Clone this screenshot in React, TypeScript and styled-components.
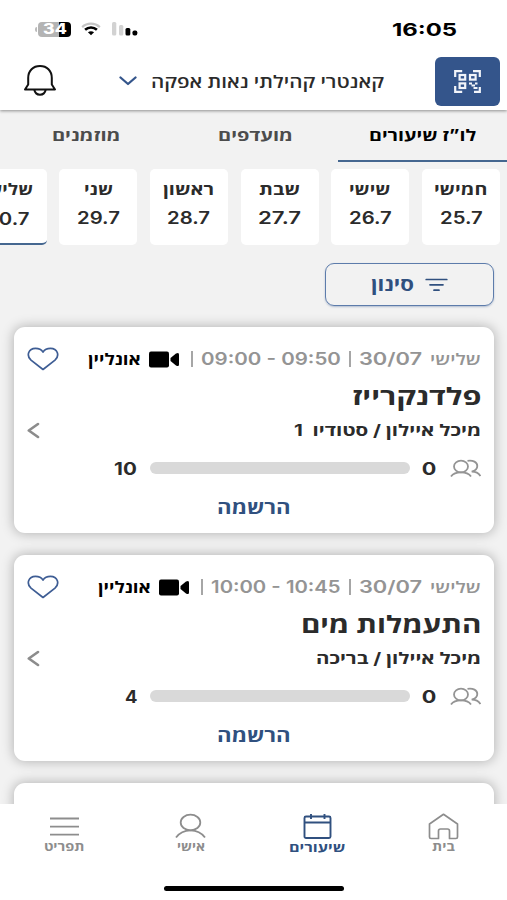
import React, { useLayoutEffect, useRef, useState } from "react";
import styled, { createGlobalStyle, css } from "styled-components";

const BLUE = "#34558b";
const NAVY = "#30507f";
const INK = "#2b2b2b";
const GREY = "#949494";

const GlobalStyle = createGlobalStyle`
  * { box-sizing: border-box; }
  body {
    margin: 0;
    background: #fff;
    color: ${INK};
    font-family: Inter, "Open Sans", "DejaVu Sans", sans-serif;
    font-weight: 600;
    overflow: hidden;
  }
  svg { display: block; flex: none; }
  button { font: inherit; color: inherit; background: none; border: 0; padding: 0; }
`;

const FitBox = styled.span<{ $w: number; $size: number; $weight: number; $color: string; $dy: number }>`
  display: flex;
  flex: none;
  direction: rtl;
  width: ${(p) => p.$w}px;
  font-size: ${(p) => p.$size}px;
  font-weight: ${(p) => p.$weight};
  color: ${(p) => p.$color};
  line-height: 1.2;
  padding-top: ${(p) => p.$dy * 2}px;
`;
const FitInner = styled.span`
  flex: none;
  white-space: pre;
  transform-origin: right center;
`;

type FitProps = {
  w: number;
  size: number;
  weight?: number;
  color?: string;
  dy?: number;
  ltr?: boolean;
  children: string;
};

function Fit({ w, size, weight = 700, color = INK, dy = 0, ltr, children }: FitProps) {
  const ref = useRef<HTMLSpanElement>(null);
  const [scale, setScale] = useState(1);
  useLayoutEffect(() => {
    const natural = ref.current?.offsetWidth ?? 0;
    if (natural) setScale(w / natural);
  }, [w, size, weight, children]);
  return (
    <FitBox $w={w} $size={size} $weight={weight} $color={color} $dy={dy}>
      <FitInner ref={ref} dir={ltr ? "ltr" : "rtl"} style={{ transform: `scaleX(${scale})` }}>
        {children}
      </FitInner>
    </FitBox>
  );
}

const Screen = styled.div`
  width: 507px;
  height: 900px;
  display: flex;
  flex-direction: column;
  background: #f2f2f2;
  overflow: hidden;
`;
const StatusBar = styled.div`
  height: 56px;
  flex: none;
  display: flex;
  align-items: center;
  justify-content: space-between;
  padding: 2px 50px 0 35px;
  background: #fff;
`;
const StatusIcons = styled.div`
  display: flex;
  align-items: center;
  gap: 10px;
`;
const Battery = styled.div`
  display: flex;
  align-items: center;
  gap: 1px;
  &::before {
    content: "";
    width: 2px;
    height: 5px;
    border-radius: 2px 0 0 2px;
    background: #bbb;
  }
`;
const BatteryBody = styled.div`
  width: 33px;
  height: 15px;
  border-radius: 4px;
  display: flex;
  align-items: center;
  justify-content: center;
  background: linear-gradient(to right, #b4b4b4 64%, #000 64%);
`;
const Header = styled.header`
  height: 54px;
  flex: none;
  direction: rtl;
  display: flex;
  align-items: center;
  padding: 0 7px 4px 22px;
  background: #fff;
  box-shadow: 0 1px 3px rgba(0, 0, 0, 0.42);
  clip-path: inset(0 0 -6px 0);
`;
const ScanButton = styled.button`
  width: 65px;
  height: 49px;
  border-radius: 6px;
  background: ${BLUE};
  display: grid;
  place-items: center;
  margin-inline-end: 51px;
`;
const Club = styled.button`
  display: flex;
  align-items: center;
  gap: 14px;
  flex: 1;
`;
const Tabs = styled.nav`
  direction: rtl;
  display: grid;
  grid-template-columns: repeat(3, 1fr);
  height: 52px;
  flex: none;
`;
const Tab = styled.button<{ $active?: boolean }>`
  display: flex;
  align-items: center;
  justify-content: center;
  padding-left: ${(p) => (p.$active ? 1 : 3)}px;
  border-bottom: 2.5px solid ${(p) => (p.$active ? "#456790" : "transparent")};
`;
const Days = styled.div`
  direction: rtl;
  display: flex;
  gap: 12.7px;
  flex: none;
  padding: 7px 7px 0 0;
  overflow: hidden;
`;
const Day = styled.button<{ $active?: boolean }>`
  flex: 0 0 78px;
  height: 76px;
  border-radius: 5px;
  background: #fff;
  display: flex;
  flex-direction: column;
  align-items: center;
  justify-content: center;
  gap: 9px;
  padding-bottom: 5px;
  ${(p) => p.$active && css`
    border-bottom: 2.5px solid #456790;
    padding-bottom: 2.5px;
  `}
`;
const FilterRow = styled.div`
  direction: rtl;
  flex: none;
  padding: 18px 13px 21px 0;
  display: flex;
`;
const FilterButton = styled.button`
  width: 169px;
  height: 43px;
  border: 1.5px solid #5d7cab;
  border-radius: 9px;
  box-shadow: 0 1px 2px rgba(52, 85, 139, 0.35);
  display: flex;
  align-items: center;
  justify-content: center;
  gap: 11px;
`;
const List = styled.main`
  flex: 1;
  min-height: 0;
  margin-top: -15px;
  padding: 15px 13px 0 14px;
  display: flex;
  flex-direction: column;
  gap: 22px;
  overflow: hidden;
`;
const Card = styled.article`
  flex: none;
  direction: rtl;
  height: 206px;
  border-radius: 11px;
  background: #fff;
  box-shadow: 0 0 12px 1px rgba(0, 0, 0, 0.25);
  padding: 16px 13px 12px;
`;
const Line = styled.div<{ $h: number; $gap?: number; $center?: boolean }>`
  height: ${(p) => p.$h}px;
  display: flex;
  align-items: center;
  justify-content: ${(p) => (p.$center ? "center" : "flex-start")};
  gap: ${(p) => p.$gap ?? 0}px;
`;
const Divider = styled.span`
  flex: none;
  width: 2px;
  height: 16px;
  background: #a6a6a6;
`;
const End = styled.span`
  margin-inline-start: auto;
  display: flex;
`;
const Online = styled.span`
  display: flex;
  align-items: center;
  gap: 8px;
  margin-inline-start: 3px;
`;
const Capacity = styled.div`
  width: 260px;
  height: 12.5px;
  border-radius: 7px;
  background: #d9d9d9;
  flex: none;
`;
const Count = styled.span<{ $start: number; $end: number }>`
  display: flex;
  margin-inline: ${(p) => p.$start}px ${(p) => p.$end}px;
`;
const BottomNav = styled.nav`
  height: 96px;
  flex: none;
  direction: rtl;
  background: #fff;
  display: flex;
  flex-direction: column;
  align-items: center;
  justify-content: space-between;
  padding-bottom: 9px;
`;
const NavItems = styled.div`
  width: 507px;
  display: grid;
  grid-template-columns: repeat(4, 126.5px);
  justify-content: center;
  padding-left: 1px;
`;
const NavItem = styled.button<{ $active?: boolean }>`
  display: flex;
  flex-direction: column;
  align-items: center;
  color: ${(p) => (p.$active ? NAVY : "#8d8d8d")};
  padding-top: 9px;
`;
const HomeIndicator = styled.div`
  width: 180px;
  height: 5px;
  border-radius: 3px;
  background: #000;
`;

const Wifi = () => (
  <svg width="20" height="14" viewBox="0 0 21 14" fill="none">
    <path d="M1.2 5C6.5.2 14.5.2 19.8 5" stroke="#c4c4c4" strokeWidth="2.3" />
    <path d="M4.3 7.8c3.6-3.2 8.8-3.2 12.400 0" stroke="#000" strokeWidth="2.8" />
    <path d="M7.3 10.5c1.9-1.500 4.500-1.500 6.400 0L10.500 13.500z" fill="#000" />
  </svg>
);
const Signal = () => (
  <svg width="27" height="14" viewBox="0 0 27 14">
    <rect x="1" y="0" width="4.3" height="13.5" rx="1.5" fill="#d2d2d2" />
    <rect x="8" y="3" width="4.3" height="10.5" rx="1.5" fill="#d2d2d2" />
    <rect x="14.5" y="6" width="4.8" height="7.5" rx="1.5" />
    <rect x="21.5" y="8.500" width="4.8" height="5" rx="1.8" />
  </svg>
);
const Bell = () => (
  <svg width="36" height="34" viewBox="0 0 36 34" fill="none" stroke="#111" strokeWidth="2" strokeLinejoin="round">
    <path d="M6.2 20.5V14C6.2 6.5 11.2 2 18 2s11.8 4.500 11.8 12v6.500L33 25.500H3z" />
    <path d="M12.3 25.500c.6 3.600 2.800 5.200 5.700 5.200s5.100-1.600 5.700-5.200" />
  </svg>
);
const Qr = () => (
  <svg width="27" height="23" viewBox="0 0 27 23" fill="none" stroke="#f2f5fa" strokeWidth="2.2">
    <path d="M1.2 7V1.200h7M19 1.200h6.800V7M1.200 16v5.800h7M25.800 17v4.800H20" />
    <rect x="5.600" y="5" width="5.600" height="4.600" />
    <rect x="16" y="5" width="5.600" height="4.600" />
    <rect x="5.600" y="13.400" width="5.600" height="4.600" />
    <path d="M15 13.500h3M17.500 15.500h3.500M21 13.500h2.500M19.500 18h4" />
  </svg>
);
const Down = () => (
  <svg width="18" height="10" viewBox="0 0 18 10" fill="none" stroke={BLUE} strokeWidth="2.3" strokeLinecap="round" strokeLinejoin="round">
    <path d="M1.500 1.500 9 8l7.500-6.500" />
  </svg>
);
const FilterIcon = () => (
  <svg width="23" height="14" viewBox="0 0 23 14" stroke={NAVY} strokeWidth="1.7" strokeLinecap="round">
    <path d="M1.200 1.500h20.600M5 6.800h13M9 12.200h5" />
  </svg>
);
const Heart = () => (
  <svg width="32" height="24" viewBox="0 0 32 24" fill="none" stroke="#3e5d94" strokeWidth="1.7" strokeLinejoin="round">
    <path d="M16 22.500 4 13.200C-1 8.500 1.500 1.400 8.500 1.400c3.500 0 6 1.300 7.500 3.700 1.500-2.400 4-3.700 7.500-3.700 7 0 9.500 7.100 4.500 11.800z" />
  </svg>
);
const Camera = () => (
  <svg width="31" height="17" viewBox="0 0 31 17">
    <rect x="0" y=".5" width="20" height="16" rx="2" />
    <path d="M21.500 7 27 2.600Q30 1 30 3.500v10Q30 16 27 14.400l-5.500-4.400z" />
  </svg>
);
const Back = () => (
  <svg width="13" height="18" viewBox="0 0 13 18" fill="none" stroke="#8c8c8c" strokeWidth="2.6" strokeLinecap="round" strokeLinejoin="round">
    <path d="M11 3 1.800 9.500 11 16" />
  </svg>
);
const People = () => (
  <svg width="31" height="18" viewBox="0 0 31 18" fill="none" stroke="#949494" strokeWidth="1.8">
    <ellipse cx="11" cy="7.500" rx="7" ry="5.900" />
    <path d="M1 17.500c2-2.800 5.500-4.100 10-4.100s8 1.300 10 4.100M17.500 1.800c5.500-1 9.800 1.500 9.800 5.200 0 3-2.200 4.700-5.600 5.700 4 0 6.900 1.300 8.700 4.300" />
  </svg>
);
const Home = () => (
  <svg width="31" height="27" viewBox="0 0 31 27" fill="none" stroke="currentColor" strokeWidth="1.7" strokeLinejoin="round">
    <path d="M1.500 11 15.500 1.300 29.500 11v13q0 1.500-1.500 1.500h-6.500V18q0-2-2-2h-7q-2 0-2 2v7.500H3Q1.500 25.500 1.500 24z" />
  </svg>
);
const Calendar = () => (
  <svg width="29" height="27" viewBox="0 0 29 27" fill="none" stroke="currentColor" strokeWidth="1.9">
    <rect x="1.500" y="3.500" width="26" height="21.500" rx="1.5" />
    <path d="M1.500 9.500h26M8 1v5M21.500 1v5" />
  </svg>
);
const Person = () => (
  <svg width="31" height="27" viewBox="0 0 31 27" fill="none" stroke="currentColor" strokeWidth="1.8">
    <ellipse cx="15.500" cy="9.500" rx="9.800" ry="7.800" />
    <path d="M1 24.500c3.500-4.800 8-7.200 14.500-7.200s11 2.400 14.500 7.200" />
  </svg>
);
const Menu = () => (
  <svg width="31" height="27" viewBox="0 0 31 27" stroke="currentColor" strokeWidth="1.8">
    <path d="M1 5.500h29M1 13.600h29M1 21.700h29" />
  </svg>
);

const days = [
  { name: "חמישי", date: "25.7", w: 53 },
  { name: "שישי", date: "26.7", w: 41 },
  { name: "שבת", date: "27.7", w: 41 },
  { name: "ראשון", date: "28.7", w: 51 },
  { name: "שני", date: "29.7", w: 29 },
  { name: "שלישי", date: "30.7", w: 51, active: true },
];

const lessons = [
  { time: "09:00 - 09:50", timeW: 140, title: "פלדנקרייז", titleW: 129, place: "מיכל איילון / סטודיו  1", placeW: 187, max: "10", maxW: 23 },
  { time: "10:00 - 10:45", timeW: 130, title: "התעמלות מים", titleW: 180, place: "מיכל איילון / בריכה", placeW: 165, max: "4", maxW: 13 },
];

function LessonCard({ lesson }: { lesson: (typeof lessons)[number] }) {
  return (
    <Card>
      <Line $h={32} $gap={8}>
        <Fit w={51} size={16} weight={600} color={GREY} dy={1}>שלישי</Fit>
        <Fit w={63} size={17} color={GREY} weight={600} dy={0.5} ltr>30/07</Fit>
        <Divider />
        <Fit w={lesson.timeW} size={17} color={GREY} weight={600} dy={0.5} ltr>{lesson.time}</Fit>
        <Divider />
        <Online>
          <Camera />
          <Fit w={53} size={16} color="#000" dy={1}>אונליין</Fit>
        </Online>
        <End><Heart /></End>
      </Line>
      <Line $h={42}>
        <Fit w={lesson.titleW} size={23.5} dy={1.5}>{lesson.title}</Fit>
      </Line>
      <Line $h={26}>
        <Fit w={lesson.placeW} size={16} dy={1}>{lesson.place}</Fit>
        <End><Back /></End>
      </Line>
      <Line $h={50}>
        <People />
        <Count $start={14} $end={12}>
          <Fit w={14} size={17} dy={1} ltr>0</Fit>
        </Count>
        <Capacity />
        <Count $start={13} $end={0}>
          <Fit w={lesson.maxW} size={17} dy={1} ltr>{lesson.max}</Fit>
        </Count>
      </Line>
      <Line $h={28} $center>
        <Fit w={74} size={18} color={NAVY} dy={1}>הרשמה</Fit>
      </Line>
    </Card>
  );
}

export default function App() {
  return (
    <>
      <GlobalStyle />
      <Screen>
        <StatusBar>
          <StatusIcons>
            <Battery>
              <BatteryBody><Fit w={24} size={14} weight={800} color="#fff" ltr>34</Fit></BatteryBody>
            </Battery>
            <Wifi />
            <Signal />
          </StatusIcons>
          <Fit w={65} size={18} weight={700} color="#000" dy={0.5} ltr>16:05</Fit>
        </StatusBar>
        <Header>
          <ScanButton aria-label="QR"><Qr /></ScanButton>
          <Club>
            <Fit w={233} size={17} weight={600} dy={1}>קאנטרי קהילתי נאות אפקה</Fit>
            <Down />
          </Club>
          <Bell />
        </Header>
        <Tabs>
          <Tab $active><Fit w={107} size={16} color="#000" dy={1}>לו”ז שיעורים</Fit></Tab>
          <Tab><Fit w={75} size={16} color="#4c4c4c" dy={1}>מועדפים</Fit></Tab>
          <Tab><Fit w={68} size={16} color="#4c4c4c" dy={1}>מוזמנים</Fit></Tab>
        </Tabs>
        <Days>
          {days.map((d) => (
            <Day key={d.date} $active={d.active}>
              <Fit w={d.w} size={16}>{d.name}</Fit>
              <Fit w={43} size={17} weight={600} ltr>{d.date}</Fit>
            </Day>
          ))}
        </Days>
        <FilterRow>
          <FilterButton>
            <FilterIcon />
            <Fit w={43} size={18} color={NAVY} dy={0.5}>סינון</Fit>
          </FilterButton>
        </FilterRow>
        <List>
          {lessons.map((l) => <LessonCard key={l.time} lesson={l} />)}
          <Card />
        </List>
        <BottomNav>
          <NavItems>
            <NavItem><Home /><Fit w={23} size={12} color="#8d8d8d">בית</Fit></NavItem>
            <NavItem $active><Calendar /><Fit w={56} size={13} color={NAVY}>שיעורים</Fit></NavItem>
            <NavItem><Person /><Fit w={28} size={12} color="#8d8d8d">אישי</Fit></NavItem>
            <NavItem><Menu /><Fit w={40} size={12} color="#8d8d8d">תפריט</Fit></NavItem>
          </NavItems>
          <HomeIndicator />
        </BottomNav>
      </Screen>
    </>
  );
}
